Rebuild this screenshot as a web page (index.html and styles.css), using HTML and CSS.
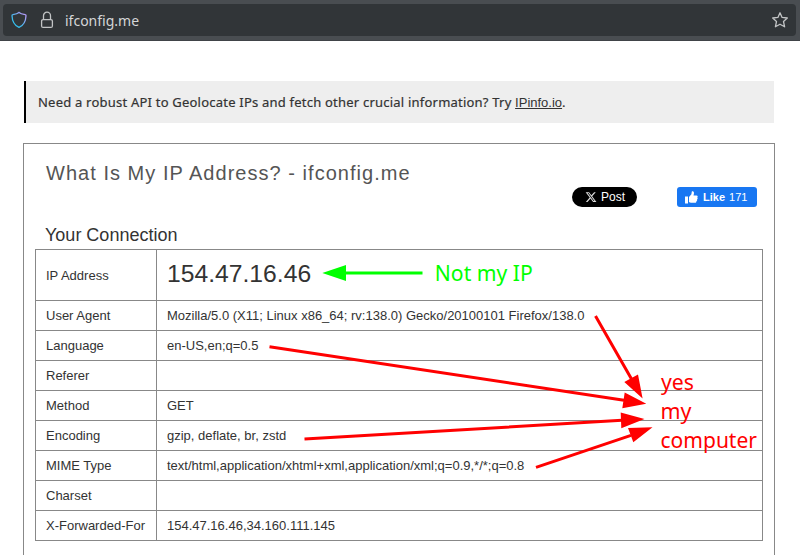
FILE: index.html
```html
<!DOCTYPE html>
<html lang="en">
<head>
<meta charset="utf-8">
<title>What Is My IP Address? - ifconfig.me</title>
<link rel="stylesheet" href="styles.css">
</head>
<body>
<header class="toolbar">
  <div class="urlbar">
    <svg class="shield" width="16" height="18" viewBox="0 0 16 18">
      <defs><linearGradient id="sh" x1="1" y1="0" x2="0" y2="1"><stop offset="0.15" stop-color="#b09cf8"/><stop offset="0.6" stop-color="#45b8ec"/><stop offset="1" stop-color="#1fc5ee"/></linearGradient></defs>
      <path d="M8 1.400C6.500 2.700 4 3.200 1.800 3.600C1.100 3.700 1 4 1 4.700C1.200 9.500 3 14.200 8 16.400C13 14.200 14.800 9.500 15 4.700C15 4 14.900 3.700 14.200 3.600C12 3.200 9.500 2.700 8 1.400Z" fill="none" stroke="url(#sh)" stroke-width="1.3"/>
    </svg>
    <svg class="lock" width="14" height="18" viewBox="0 0 14 18">
      <rect x="1.600" y="8.600" width="10.800" height="7.800" rx="1.500"/>
      <path d="M3.500 8.500V4.700A3.500 3.500 0 0 1 10.500 4.700V8.500"/>
    </svg>
    <span class="url">ifconfig.me</span>
    <svg class="star" width="18" height="18" viewBox="0 0 18 18">
      <path d="M9 1.800L11.100 6.400L16.300 7L12.500 10.500L13.600 15.800L9 13.200L4.400 15.800L5.500 10.500L1.700 7L6.900 6.400Z"/>
    </svg>
  </div>
</header>
<main class="page">
  <p class="notice">Need a robust API to Geolocate IPs and fetch other crucial information? Try <a href="#">IPinfo.io</a>.</p>
  <section class="panel">
    <h1>What Is My IP Address? - ifconfig.me</h1>
    <div class="social">
      <div class="post">
        <svg width="12" height="12" viewBox="0 0 24 24"><path fill="#ddd" d="M18.244 2.250h3.308l-7.227 8.260 8.502 11.240H16.170l-5.214-6.817L4.990 21.750H1.680l7.730-8.835L1.254 2.250H8.080l4.713 6.231zm-1.161 17.520h1.833L7.084 4.126H5.117z"/></svg>
        <span>Post</span>
      </div>
      <div class="like">
        <svg width="13" height="13" viewBox="0 0 13 13"><path fill="#fff" d="M0 5.400H3V12.500H0ZM4 6L6.400 3.300L6.800 0.600C7.600 0 9 0.600 9 2.300L8.500 4.500H11.500C12.800 4.500 13 5.800 12.300 6.400C12.900 7 12.700 8 12 8.400C12.400 9.100 12 9.900 11.400 10.200C11.600 11.100 11 11.700 10.300 11.700H6C5.100 11.700 4.600 11.400 4 11Z"/></svg>
        <b>Like</b><span>171</span>
      </div>
    </div>
    <h2>Your Connection</h2>
    <table>
      <tr class="ip"><th>IP Address</th><td>154.47.16.46</td></tr>
      <tr><th>User Agent</th><td>Mozilla/5.0 (X11; Linux x86_64; rv:138.0) Gecko/20100101 Firefox/138.0</td></tr>
      <tr><th>Language</th><td>en-US,en;q=0.5</td></tr>
      <tr><th>Referer</th><td></td></tr>
      <tr><th>Method</th><td>GET</td></tr>
      <tr><th>Encoding</th><td>gzip, deflate, br, zstd</td></tr>
      <tr><th>MIME Type</th><td>text/html,application/xhtml+xml,application/xml;q=0.9,*/*;q=0.8</td></tr>
      <tr><th>Charset</th><td></td></tr>
      <tr><th>X-Forwarded-For</th><td>154.47.16.46,34.160.111.145</td></tr>
    </table>
  </section>
</main>
<svg class="notes" width="800" height="555" viewBox="0 0 800 555">
  <g class="green">
    <path class="line" d="M422.500 272.900H345"/>
    <path d="M322.300 272.900L346 265V281Z"/>
    <text x="434.800" y="281" textLength="98" lengthAdjust="spacingAndGlyphs">Not my IP</text>
  </g>
  <g class="red">
    <path class="line" d="M595.500 316L631.500 379M269.500 346.700L624 400.300M304.500 439L622 420.300M536 467.300L631 435.300"/>
    <path d="M642.600 398.500L624.300 382L638 374.500ZM646.300 403.700L624.700 392.500L622.300 408.200ZM644.500 419L620.700 412.500L621.300 428.200ZM652.500 427.200L628 428L633.300 442.300Z"/>
    <text x="661" y="390" textLength="33" lengthAdjust="spacingAndGlyphs">yes</text>
    <text x="660.500" y="419" textLength="31" lengthAdjust="spacingAndGlyphs">my</text>
    <text x="660.500" y="448" textLength="96.500" lengthAdjust="spacingAndGlyphs">computer</text>
  </g>
</svg>
</body>
</html>
```
FILE: styles.css
```css
* { box-sizing: border-box; }
body {
  margin: 0;
  height: 555px;
  position: relative;
  background: #fff;
  color: #333;
  font: 13px/20px "Liberation Sans", Arial, sans-serif;
}
.toolbar {
  height: 41px;
  padding: 4px 4px 5px 3px;
  background: #494d51;
  border-bottom: 1px solid #404347;
}
.urlbar {
  height: 32px;
  display: flex;
  align-items: center;
  padding: 0 7px 0 8px;
  border-radius: 4px;
  background: #313538;
}
.lock { margin-left: 13px; }
.lock, .star { fill: none; stroke: #c2c4c5; stroke-width: 1.300; stroke-linejoin: round; }
.url {
  margin-left: 11px;
  padding-top: 2px;
  flex: 1;
  color: #d4d6d7;
  font: 14px/20px "Noto Sans", sans-serif;
}
.page { padding: 40px 25px 0 23px; }
.notice {
  margin: 0 1px 20px;
  height: 42px;
  padding: 11px 12px;
  border-left: 2px solid #000;
  background: #eee;
  font: 13px/20px "Noto Sans", sans-serif;
  letter-spacing: 0.215px;
  -webkit-text-stroke: 0.200px #333;
  white-space: nowrap;
}
.notice a { color: #333; font: 13px/20px "Liberation Sans", sans-serif; letter-spacing: 0; -webkit-text-stroke: 0; }
.panel {
  height: 412px;
  padding: 0 11px;
  border: 1px solid #888;
  border-bottom: 0;
}
h1 {
  margin: 16px 0 0 11px;
  font-size: 20px;
  line-height: 26px;
  font-weight: 400;
  letter-spacing: 1.030px;
  color: #555;
}
.social { display: flex; justify-content: flex-end; gap: 40px; margin-top: 1px; padding-right: 6px; color: #fff; }
.post, .like { height: 20px; display: flex; align-items: center; }
.post { width: 65px; padding-left: 13px; gap: 4px; border-radius: 10px; background: #000; font-size: 12px; }
.like { width: 80px; padding-left: 8px; border-radius: 3px; background: #1877f2; font-size: 11px; }
.like b { margin: 0 4px 0 5px; }
h2 { margin: 17px 0 2px 10px; font-size: 18px; line-height: 23px; font-weight: 400; }
table { width: 728px; border-collapse: collapse; table-layout: fixed; }
th, td { height: 30px; padding: 0 10px; border: 1px solid #888; text-align: left; font-weight: 400; line-height: 20px; }
th { width: 121px; white-space: nowrap; }
.ip th, .ip td { height: 51px; }
.ip th { padding-top: 2px; }
.ip td { font-size: 24.700px; padding-bottom: 3px; }
.notes { position: absolute; inset: 0; font: 22px "Noto Sans", sans-serif; }
.line { fill: none; stroke-width: 3; }
.green { fill: #0f0; }
.green .line { stroke: #0f0; }
.red { fill: #f00; }
.red .line { stroke: #f00; }
```
